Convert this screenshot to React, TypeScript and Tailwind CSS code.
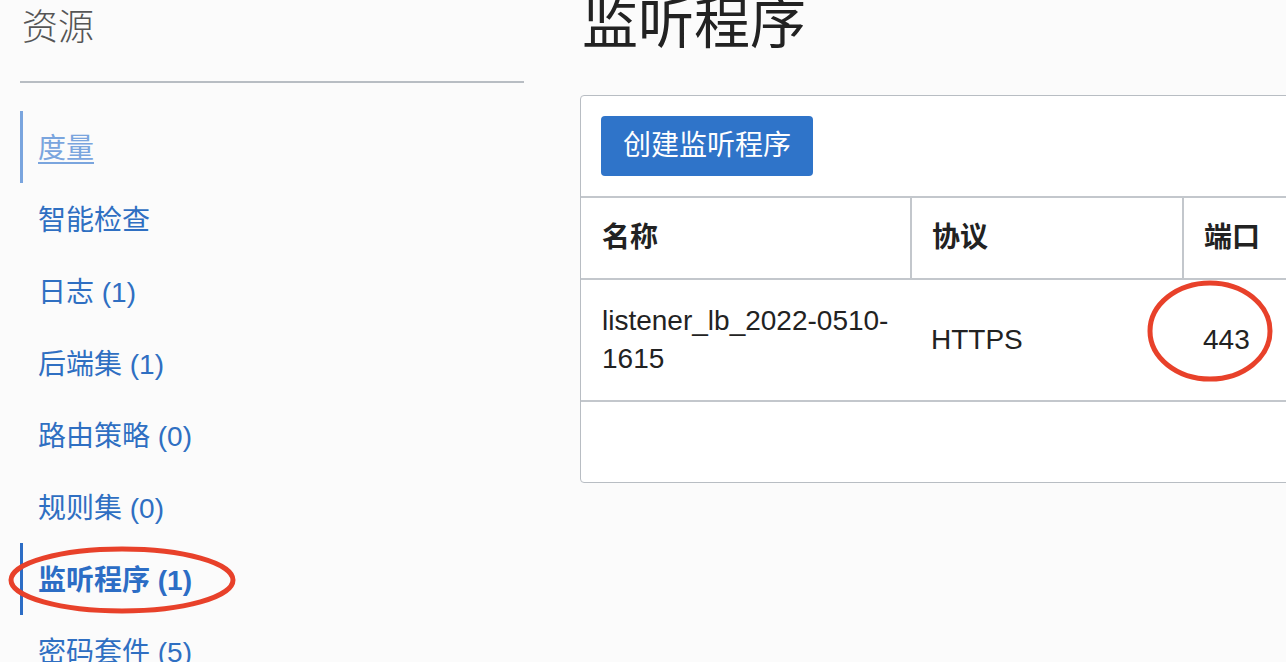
import React from 'react';

interface NavItem {
  label: string;
  state?: 'hover' | 'active';
}

const navItems: NavItem[] = [
  { label: '度量', state: 'hover' },
  { label: '智能检查' },
  { label: '日志 (1)' },
  { label: '后端集 (1)' },
  { label: '路由策略 (0)' },
  { label: '规则集 (0)' },
  { label: '监听程序 (1)', state: 'active' },
  { label: '密码套件 (5)' },
];

const font = { fontFamily: '"Liberation Sans", "Noto Sans CJK SC", sans-serif' };

function Sidebar() {
  return (
    <aside className="w-[504px] shrink-0">
      <h2 className="h-[81px] pt-[6px] pl-[2px] text-[36px] leading-[43px] font-light text-[#555]">资源</h2>
      <div className="h-[2px] bg-[#b8bdc3]" />
      <nav className="relative mt-[28px]">
        {navItems.map((item) => (
          <div
            key={item.label}
            className={
              item.state === 'active'
                ? 'h-[72px] flex items-center pt-[3px] border-l-[3px] border-[#2c6dc5] pl-[15px] text-[28px] font-bold text-[#2c6dc5]'
                : item.state === 'hover'
                ? 'h-[72px] flex items-center pt-[3px] border-l-[3px] border-[#7aa5de] pl-[15px] text-[28px] text-[#7aa5de] underline underline-offset-4'
                : 'h-[72px] flex items-center pt-[3px] border-l-[3px] border-transparent pl-[15px] text-[28px] text-[#2f6fc2]'
            }
          >
            {item.label}
          </div>
        ))}
        {/* marker around the active item */}
        <svg className="absolute left-[-14px] top-[434px] pointer-events-none" width="232" height="70" viewBox="0 0 232 70">
          <ellipse cx="116" cy="35" rx="111" ry="31" fill="none" stroke="#e8412a" strokeWidth="5" />
        </svg>
      </nav>
    </aside>
  );
}

function ListenerTable() {
  return (
    <div className="relative mt-[42px] border border-[#b8bdc3] rounded-[4px] bg-white w-[760px] h-[388px]">
      <div className="p-[20px]">
        <button className="h-[60px] px-[22px] bg-[#2f74c9] text-white text-[28px] rounded-[4px]">创建监听程序</button>
      </div>
      <table className="w-full border-collapse text-[28px] text-[#222]">
        <thead>
          <tr className="h-[82px] border-t-2 border-b-2 border-[#c3c7cc]">
            <th className="w-[330px] text-left font-bold pl-[21px]">名称</th>
            <th className="w-[272px] text-left font-bold pl-[20px] border-l-2 border-[#c3c7cc]">协议</th>
            <th className="text-left font-bold pl-[20px] border-l-2 border-[#c3c7cc]">端口</th>
          </tr>
        </thead>
        <tbody>
          <tr className="h-[122px] border-b-2 border-[#c3c7cc]">
            <td className="pl-[21px] pr-[8px] leading-[38px]">listener_lb_2022-0510-1615</td>
            <td className="pl-[20px]">HTTPS</td>
            <td className="pl-[20px]">443</td>
          </tr>
        </tbody>
      </table>
      {/* marker around the port */}
      <svg className="absolute left-[565px] top-[184px] pointer-events-none" width="130" height="104" viewBox="0 0 130 104">
        <ellipse cx="64" cy="51" rx="60" ry="48" fill="none" stroke="#e8412a" strokeWidth="5" />
      </svg>
    </div>
  );
}

export default function App() {
  return (
    <div className="w-[1286px] h-[662px] overflow-hidden bg-[#fbfbfb]" style={font}>
      <div className="flex gap-[56px] pl-[20px]">
        <Sidebar />
        <main className="flex-1">
          <h1 className="-mt-[5px] pl-[2px] text-[56px] leading-[58px] text-[#222]">监听程序</h1>
          <ListenerTable />
        </main>
      </div>
    </div>
  );
}
